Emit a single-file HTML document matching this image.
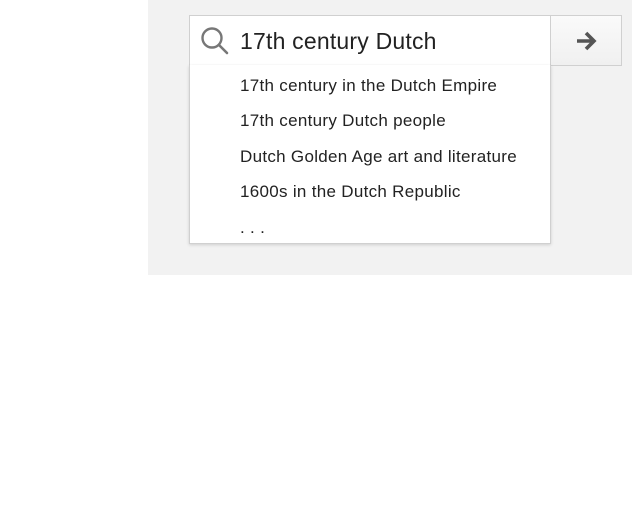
<!DOCTYPE html>
<html><head><style>
body{margin:0;width:632px;height:532px;background:#fff;font-family:"Liberation Sans",sans-serif;position:relative;overflow:hidden}
.panel{position:absolute;left:148px;top:0;width:484px;height:275px;background:#f2f2f2}
.inp{position:absolute;left:189px;top:15px;width:360px;height:49px;background:#fff;border:1px solid #d0d0d0;border-right:none}
.inp span{position:absolute;left:50px;top:12px;font-size:23px;color:#222;letter-spacing:0.2px}
.btn{position:absolute;left:550px;top:15px;width:70px;height:49px;background:linear-gradient(#fafafa,#f0f0f0);border:1px solid #d0d0d0}
.dd{position:absolute;left:189px;top:65px;width:360px;height:178px;background:#fff;border:1px solid #d0d0d0;border-top:none;box-shadow:0 1px 3px rgba(0,0,0,.15)}
.it{position:absolute;left:50px;font-size:17px;color:#222;letter-spacing:0.3px}
</style></head><body>
<div class="panel"></div>
<div class="inp">
<svg style="position:absolute;left:10px;top:10px" width="30" height="30" viewBox="0 0 30 30"><circle cx="12" cy="12" r="9.5" fill="none" stroke="#777" stroke-width="2.4"/><line x1="19" y1="19" x2="27" y2="27" stroke="#777" stroke-width="2.6" stroke-linecap="round"/></svg>
<span>17th century Dutch</span></div>
<div class="btn"><svg style="position:absolute;left:24px;top:13px" width="24" height="24" viewBox="0 0 24 24"><path d="M2 12H18M11 4L19 12L11 20" fill="none" stroke="#555" stroke-width="3.6" stroke-linejoin="miter"/></svg></div>
<div class="dd">
<div class="it" style="top:11px">17th century in the Dutch Empire</div>
<div class="it" style="top:46px">17th century Dutch people</div>
<div class="it" style="top:82px">Dutch Golden Age art and literature</div>
<div class="it" style="top:117px">1600s in the Dutch Republic</div>
<div class="it" style="top:153px">. . .</div>
</div>
</body></html>
